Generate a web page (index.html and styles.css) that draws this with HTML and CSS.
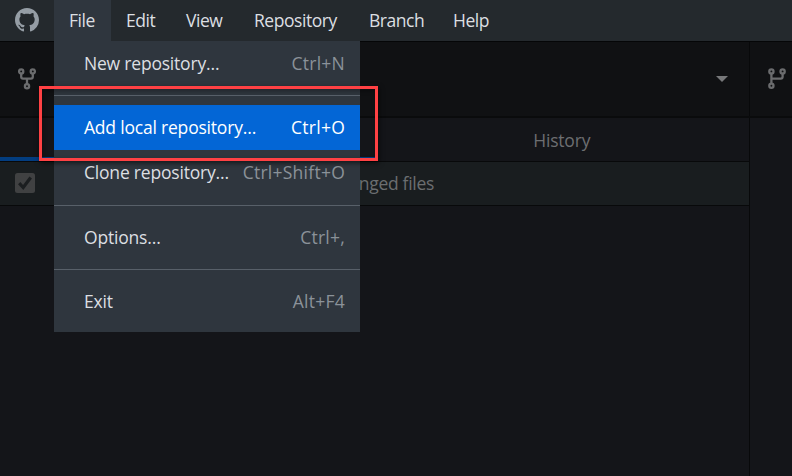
FILE: index.html
```html
<!DOCTYPE html>
<html lang="en">
<head>
<meta charset="utf-8">
<title>GitHub Desktop</title>
<link rel="stylesheet" href="styles.css">
</head>
<body>
<header class="titlebar">
  <svg class="logo" viewBox="0 0 16 16"><path d="M8 0C3.58 0 0 3.58 0 8c0 3.54 2.29 6.53 5.47 7.59.4.07.55-.17.55-.38 0-.19-.01-.82-.01-1.49-2.01.37-2.53-.49-2.69-.94-.09-.23-.48-.94-.82-1.13-.28-.15-.68-.52-.01-.53.63-.01 1.08.58 1.23.82.72 1.21 1.87.87 2.33.66.07-.52.28-.87.51-1.07-1.78-.2-3.64-.89-3.64-3.95 0-.87.31-1.59.82-2.15-.08-.2-.36-1.02.08-2.12 0 0 .67-.21 2.2.82.64-.18 1.32-.27 2-.27s1.36.09 2 .27c1.53-1.04 2.2-.82 2.2-.82.44 1.1.16 1.92.08 2.12.51.56.82 1.27.82 2.15 0 3.07-1.87 3.75-3.65 3.95.29.25.54.73.54 1.48 0 1.07-.01 1.93-.01 2.2 0 .21.15.46.55.38A8.01 8.01 0 0 0 16 8c0-4.42-3.58-8-8-8z"/></svg>
  <nav class="menubar">
    <span class="tab-file open">File</span><span class="tab-edit">Edit</span><span class="tab-view">View</span><span class="tab-repo">Repository</span><span class="tab-branch">Branch</span><span class="tab-help">Help</span>
  </nav>
</header>
<div class="toolbar">
  <div class="repo-picker">
    <svg class="fork" viewBox="0 0 18 22"><circle cx="3.2" cy="3.4" r="2.1"/><circle cx="14.8" cy="3.4" r="2.1"/><circle cx="9" cy="18.2" r="2.1"/><path d="M3.2 5.6v3.2q0 1.8 1.8 1.8h8q1.8 0 1.8-1.8V5.6M9 10.6v5.6"/></svg>
    <span class="caret"></span>
  </div>
  <div class="branch-picker">
    <svg class="branch" viewBox="0 0 18 22"><circle cx="3.4" cy="3.4" r="2.1"/><circle cx="14.6" cy="3.4" r="2.1"/><circle cx="3.4" cy="17.8" r="2.1"/><path d="M3.4 5.6v10M3.4 10.6h9.4q1.8 0 1.8-1.8V5.6"/></svg>
  </div>
</div>
<main class="content">
  <section class="sidebar">
    <div class="tabs"><span class="tab active"></span><span class="tab">History</span></div>
    <div class="files">
      <svg class="check" viewBox="0 0 20 20"><rect width="20" height="20" rx="2.5"/><path d="M4.2 10.2l4 4.3 7.5-10"/></svg>
      <span class="files-label">nged files</span>
    </div>
  </section>
  <section class="detail"></section>
</main>
<div class="menu">
  <div class="item"><span>New repository…</span><span class="key">Ctrl+N</span></div>
  <hr>
  <div class="item selected"><span>Add local repository…</span><span class="key">Ctrl+O</span></div>
  <div class="item"><span>Clone repository…</span><span class="key">Ctrl+Shift+O</span></div>
  <hr class="tall">
  <div class="item"><span>Options…</span><span class="key">Ctrl+,</span></div>
  <hr>
  <div class="item"><span>Exit</span><span class="key">Alt+F4</span></div>
</div>
<div class="highlight"></div>
</body>
</html>
```
FILE: styles.css
```css
* { box-sizing: border-box; }
body {
  margin: 0;
  height: 476px;
  overflow: hidden;
  display: flex;
  flex-direction: column;
  background: #141519;
  color: #dcdfe2;
  font: 17.5px/24px "Open Sans", "Noto Sans", sans-serif;
  letter-spacing: -0.2px;
  white-space: nowrap;
}
svg { display: block; flex: none; }
.titlebar { height: 41px; display: flex; background: #24292d; }
.logo { width: 24px; height: 24px; margin: 8px 15px 0; fill: #959da5; }
.menubar { display: flex; letter-spacing: -0.45px; }
.menubar span { padding: 8px 0 0 15px; height: 41px; }
.menubar .open { background: #2f363e; }
.tab-file { width: 57px; }
.tab-edit { width: 60px; }
.tab-view { width: 68px; }
.tab-repo { width: 115px; }
.tab-branch { width: 84px; }
.tab-help { width: 67px; }
.toolbar { height: 77px; display: flex; background: #101113; border-top: 1px solid #050607; border-bottom: 2px solid #0a0b0c; }
.repo-picker { width: 750px; border-right: 1px solid #08090a; display: flex; align-items: center; justify-content: space-between; padding: 0 21px 0 18px; }
.branch-picker { display: flex; align-items: center; padding-left: 18px; }
.fork, .branch { width: 18px; height: 22px; fill: none; stroke: #6b6c6e; stroke-width: 2.3; }
.caret { border: 6px solid transparent; border-top-color: #77787a; border-bottom: 0; }
.content { flex: 1; display: flex; }
.sidebar { width: 750px; border-right: 1px solid #08090a; }
.tabs { height: 44px; display: flex; border-bottom: 1px solid #08090a; color: #6d6e71; }
.tab { flex: 1; text-align: center; padding-top: 10px; }
.active { border-bottom: 4px solid #033d80; }
.files { height: 44px; display: flex; align-items: center; background: #191d1f; border-bottom: 1px solid #08090a; padding-left: 15px; }
.check { width: 20px; height: 20px; margin-top: -2px; fill: #404142; }
.check path { fill: none; stroke: #1b1e20; stroke-width: 3.2; }
.files-label { width: 399px; padding-bottom: 1px; text-align: right; color: #6b6e70; letter-spacing: -0.3px; }
.menu { position: absolute; left: 54px; top: 41px; width: 306px; height: 291px; background: #2f363e; }
.item { height: 45px; display: flex; align-items: center; justify-content: space-between; padding: 0 15px 1px 30px; }
.key { color: #8b9299; letter-spacing: 0.25px; }
.selected, .selected .key { background: #0366d6; color: #fff; }
hr { height: 1px; margin: 9px 0; border: 0; background: #586069; }
.tall { margin: 10px 0 9px; }
.highlight { position: absolute; left: 39px; top: 86px; width: 339px; height: 75px; border: 3px solid #ff4144; box-shadow: 1px 2px 5px #0009, inset 1px 2px 5px #0005; }
```
